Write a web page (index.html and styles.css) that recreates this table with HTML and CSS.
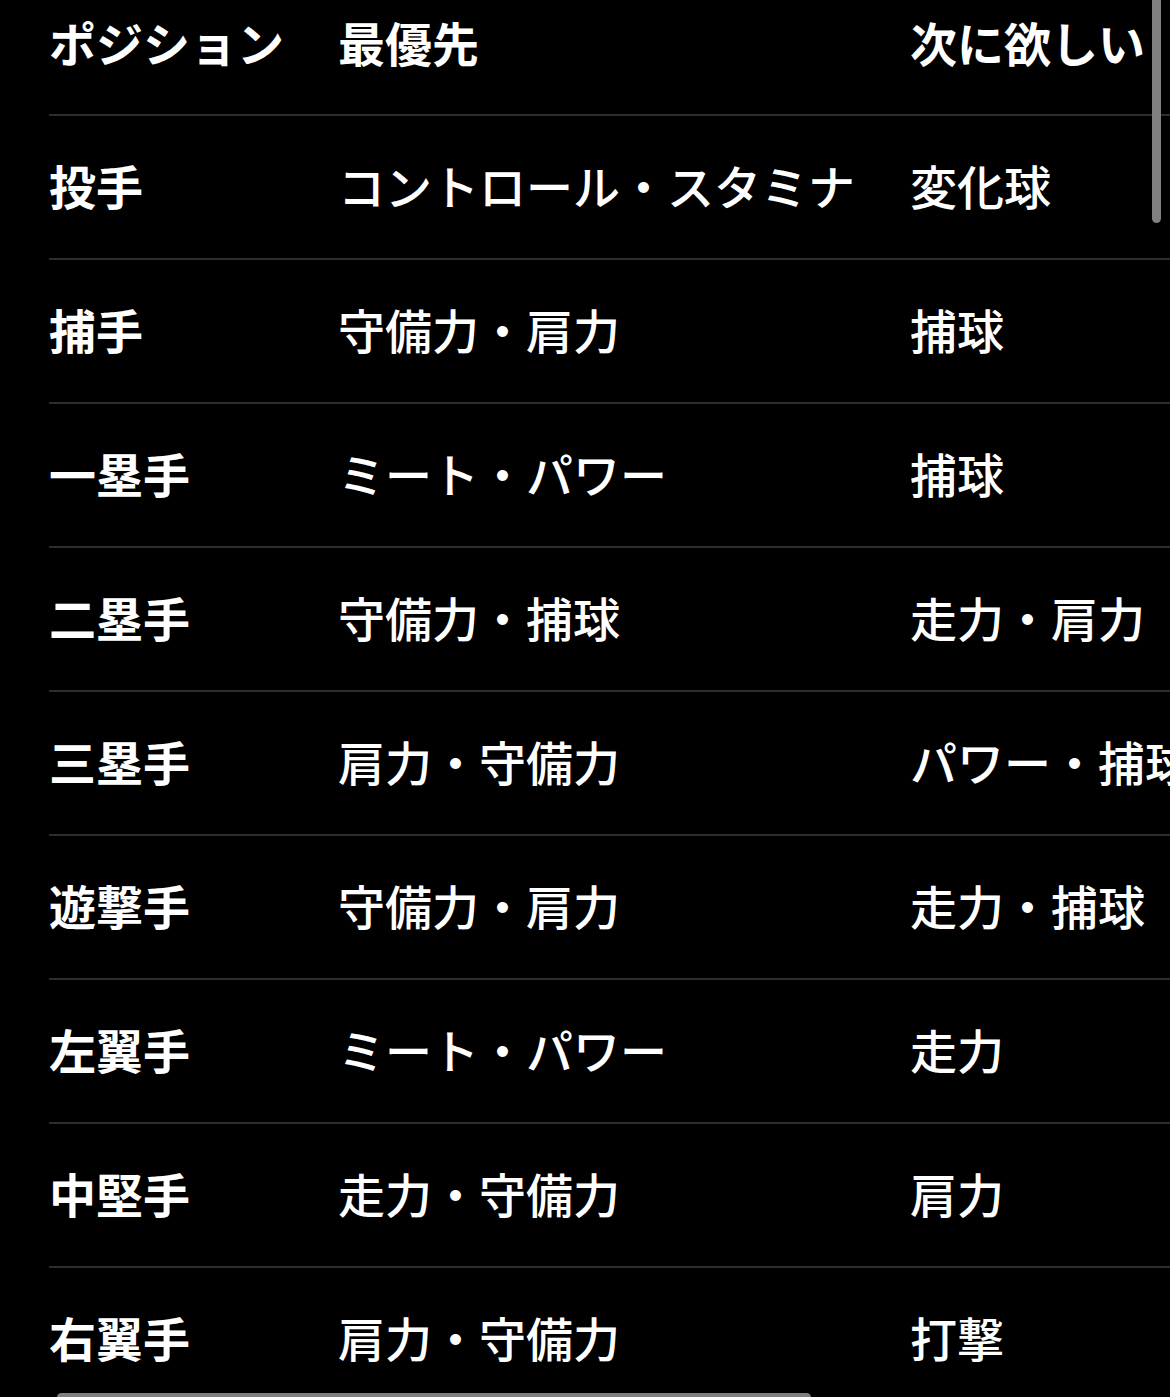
FILE: index.html
```html
<!DOCTYPE html>
<html lang="ja">
<head>
<meta charset="utf-8">
<title>ポジション別 優先能力</title>
<link rel="stylesheet" href="styles.css">
</head>
<body>
<div class="viewport">
  <div class="table">
    <div class="row head">
      <div class="cell">ポジション</div>
      <div class="cell">最優先</div>
      <div class="cell">次に欲しい</div>
    </div>
    <div class="row">
      <div class="cell pos">投手</div>
      <div class="cell">コントロール・スタミナ</div>
      <div class="cell">変化球</div>
    </div>
    <div class="row">
      <div class="cell pos">捕手</div>
      <div class="cell">守備力・肩力</div>
      <div class="cell">捕球</div>
    </div>
    <div class="row">
      <div class="cell pos">一塁手</div>
      <div class="cell">ミート・パワー</div>
      <div class="cell">捕球</div>
    </div>
    <div class="row">
      <div class="cell pos">二塁手</div>
      <div class="cell">守備力・捕球</div>
      <div class="cell">走力・肩力</div>
    </div>
    <div class="row">
      <div class="cell pos">三塁手</div>
      <div class="cell">肩力・守備力</div>
      <div class="cell">パワー・捕球</div>
    </div>
    <div class="row">
      <div class="cell pos">遊撃手</div>
      <div class="cell">守備力・肩力</div>
      <div class="cell">走力・捕球</div>
    </div>
    <div class="row">
      <div class="cell pos">左翼手</div>
      <div class="cell">ミート・パワー</div>
      <div class="cell">走力</div>
    </div>
    <div class="row">
      <div class="cell pos">中堅手</div>
      <div class="cell">走力・守備力</div>
      <div class="cell">肩力</div>
    </div>
    <div class="row">
      <div class="cell pos">右翼手</div>
      <div class="cell">肩力・守備力</div>
      <div class="cell">打撃</div>
    </div>
  </div>
  <div class="vscroll"></div>
  <div class="hscroll"></div>
</div>
</body>
</html>
```

FILE: styles.css
```css
html, body {
  margin: 0;
  padding: 0;
  background: #000;
}

body {
  font-family: "Noto Sans CJK JP", "Noto Sans", sans-serif;
  color: #fff;
}

.viewport {
  position: relative;
  width: 1170px;
  height: 1397px;
  overflow: hidden;
  padding-left: 49px;
  box-sizing: border-box;
}

.table {
  display: flex;
  flex-direction: column;
  width: 1300px;
}

.row {
  display: grid;
  grid-template-columns: 289px 572px 439px;
  height: 144px;
  box-sizing: border-box;
  padding-bottom: 4px;
  border-bottom: 2px solid #2d2d2d;
  align-items: center;
}

.row.head {
  height: 116px;
  padding-bottom: 30px;
}

.cell {
  font-size: 47px;
  line-height: 1.2;
  font-weight: 500;
  white-space: nowrap;
}

.head .cell,
.cell.pos {
  font-weight: 700;
}

.vscroll {
  position: absolute;
  top: -10px;
  left: 1152px;
  width: 9px;
  height: 233px;
  border-radius: 5px;
  background: #808080;
}

.hscroll {
  position: absolute;
  top: 1393px;
  left: 57px;
  width: 754px;
  height: 9px;
  border-radius: 5px;
  background: #808080;
}
```
